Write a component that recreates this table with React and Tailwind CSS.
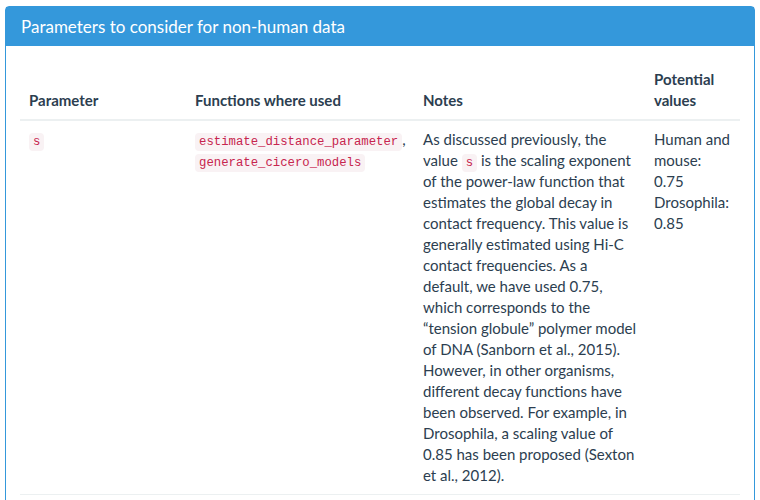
export default function App() {
  const code =
    "rounded-[4px] bg-[#f9f2f4] px-[4px] py-[2px] text-[12.3px] leading-none text-[#c7254e] [font-family:'Liberation_Mono',monospace]";

  return (
    <div className="h-[500px] overflow-hidden bg-white pt-[6px] pl-[5px] pr-[5px] [font-family:Lato,'Liberation_Sans',sans-serif] text-[15px] text-[#2c3e50]">
      <div className="h-[520px] rounded-t-[4px] border border-[#3498db]">
        <div className="h-[39px] bg-[#3498db] px-[15px] pt-[10px]">
          <h3 className="text-[17px] leading-[19px] text-white">
            Parameters to consider for non-human data
          </h3>
        </div>
        <div className="pt-[15px] pl-[14px] pr-[14px]">
          <table className="w-[720px] table-fixed border-collapse leading-[21px]">
            <colgroup>
              <col className="w-[167px]" />
              <col className="w-[228px]" />
              <col className="w-[231px]" />
              <col className="w-[94px]" />
            </colgroup>
            <thead>
              <tr className="border-b-2 border-[#ecf0f1] text-left align-bottom font-bold">
                <th className="p-[8px] pl-[9px]">Parameter</th>
                <th className="p-[8px]">Functions where used</th>
                <th className="p-[8px]">Notes</th>
                <th className="p-[8px]">Potential values</th>
              </tr>
            </thead>
            <tbody>
              <tr className="border-b border-[#ecf0f1] align-top">
                <td className="p-[8px] pl-[9px]">
                  <code className={code}>s</code>
                </td>
                <td className="p-[8px]">
                  <code className={code}>estimate_distance_parameter</code>,{" "}
                  <code className={code}>generate_cicero_models</code>
                </td>
                <td className="p-[8px]">
                  As discussed previously, the value <code className={code}>s</code> is the
                  scaling exponent of the power-law function that estimates the global decay in
                  contact frequency. This value is generally estimated using Hi-C contact
                  frequencies. As a default, we have used 0.75, which corresponds to the
                  “tension globule” polymer model of DNA (Sanborn et al., 2015). However, in
                  other organisms, different decay functions have been observed. For example, in
                  Drosophila, a scaling value of 0.85 has been proposed (Sexton et al., 2012).
                </td>
                <td className="p-[8px]">
                  Human and mouse: 0.75
                  <br />
                  Drosophila: 0.85
                </td>
              </tr>
            </tbody>
          </table>
        </div>
      </div>
    </div>
  );
}
